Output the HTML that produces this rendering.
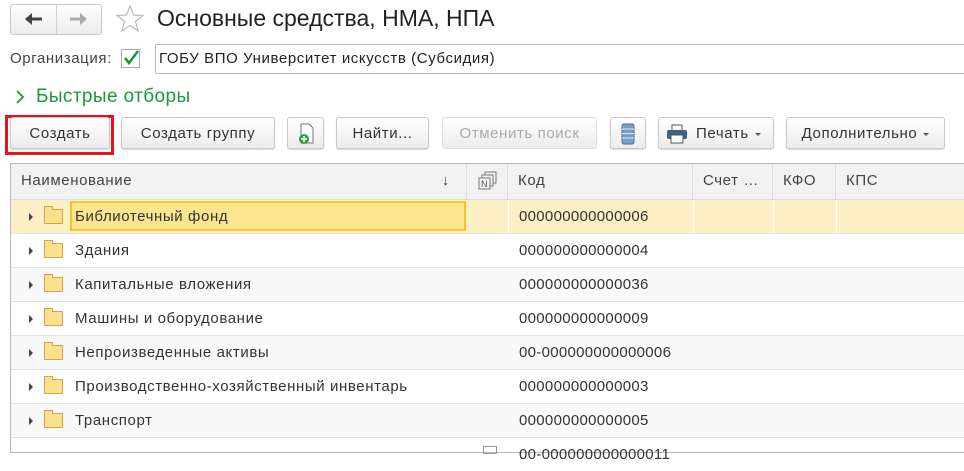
<!DOCTYPE html>
<html><head><meta charset="utf-8"><style>
body{margin:0;width:964px;height:449px;overflow:hidden;background:#fff;font-family:"Liberation Sans",Arial,sans-serif;color:#333;font-size:15px;letter-spacing:0.6px;position:relative}
.a{position:absolute}
.btn{position:absolute;top:117px;height:32px;border:1px solid #c8c8c8;border-radius:3px;background:linear-gradient(#fff,#ececec);box-shadow:0 1px 1px rgba(0,0,0,.15);line-height:32px;text-align:center;color:#333;font-size:15px;box-sizing:border-box}
.row{position:absolute;left:11px;width:953px;height:33px;border-bottom:1px solid #e2e2e2}
.row .t{position:absolute;left:64px;top:8px}
.row .c{position:absolute;left:508px;top:8px;letter-spacing:0.3px}
.tri{position:absolute;left:18px;top:13px;width:0;height:0;border-left:4px solid #444;border-top:4px solid transparent;border-bottom:4px solid transparent}
.fold{position:absolute;left:33px;top:9px;width:17px;height:13px;border:1px solid #d4a24a;background:#fbe08e;border-radius:1px}
.fold:before{content:"";position:absolute;left:-1px;top:-4px;width:7px;height:3px;border:1px solid #d4a24a;border-bottom:none;background:#fbe08e}
.hd{position:absolute;top:164px;height:35px;background:#f2f2f2;border-right:1px solid #ddd;line-height:34px;box-sizing:border-box;padding-left:10px;color:#444}
.dd{display:inline-block;width:0;height:0;border-top:3px solid #555;border-left:3px solid transparent;border-right:3px solid transparent;vertical-align:middle;margin-left:6px}
</style></head><body>
<div class="a" style="left:10px;top:4px;width:90px;height:29px;border:1px solid #c8c8c8;border-radius:3px;background:linear-gradient(#fff,#ececec)"></div>
<div class="a" style="left:56px;top:5px;width:1px;height:29px;background:#d0d0d0"></div>
<svg class="a" style="left:24px;top:11px" width="20" height="16"><path d="M2 8h16" stroke="#444" stroke-width="3"/><path d="M1 8l7-6v12z" fill="#444"/></svg>
<svg class="a" style="left:68px;top:11px" width="20" height="16"><path d="M2 8h14" stroke="#aaa" stroke-width="3"/><path d="M19 8l-7-6v12z" fill="#aaa"/></svg>
<svg class="a" style="left:115px;top:4px" width="30" height="30" viewBox="0 0 30 30"><polygon points="15,2 18.5,11 28,11.5 20.5,17.5 23,27 15,21.5 7,27 9.5,17.5 2,11.5 11.5,11" fill="none" stroke="#bbb" stroke-width="1.2"/></svg>
<div class="a" style="left:157px;top:5px;font-size:23px;color:#222;letter-spacing:0">Основные средства, НМА, НПА</div>
<div class="a" style="left:10px;top:50px;color:#444">Организация:</div>
<div class="a" style="left:121px;top:49px;width:17px;height:17px;border:1px solid #aaa;background:#fff"></div>
<svg class="a" style="left:121px;top:48px" width="20" height="20"><path d="M4 10 L8 15 L17 3" stroke="#1a9a3a" stroke-width="2.6" fill="none"/></svg>
<div class="a" style="left:155px;top:44px;width:815px;height:28px;border:1px solid #bbb;border-radius:2px"></div>
<div class="a" style="left:159px;top:50px;color:#222">ГОБУ ВПО Университет искусств (Субсидия)</div>
<svg class="a" style="left:15px;top:89px" width="10" height="16"><path d="M2 2l6 6-6 6" stroke="#1a9a3a" stroke-width="1.8" fill="none"/></svg>
<div class="a" style="left:36px;top:86px;font-size:19px;color:#1a9a3a;letter-spacing:0.4px">Быстрые отборы</div>
<div class="a" style="left:5px;top:115px;width:103px;height:34px;border:3px solid #e8141b"></div>
<div class="btn" style="left:10px;width:100px">Создать</div>
<div class="btn" style="left:121px;width:154px">Создать группу</div>
<div class="btn" style="left:287px;width:37px"><svg width="20" height="24" style="margin-top:4px"><path d="M5 2h8l4 4v15H5z" fill="#fff" stroke="#777"/><circle cx="8" cy="17" r="5" fill="#2f9e3c"/><path d="M8 14v6M5 17h6" stroke="#fff" stroke-width="1.6"/></svg></div>
<div class="btn" style="left:336px;width:93px">Найти...</div>
<div class="btn" style="left:442px;width:155px;color:#aaa;box-shadow:none;border-color:#ddd">Отменить поиск</div>
<div class="btn" style="left:610px;width:36px"><svg width="14" height="22" style="margin-top:5px"><rect x="1" y="1" width="12" height="20" rx="2" fill="#7aa0c8" stroke="#4b6f95"/><path d="M1 6h12M1 10.5h12M1 15h12" stroke="#dde8f3"/></svg></div>
<div class="btn" style="left:658px;width:116px;text-align:left;padding-left:37px">Печать<span class="dd"></span></div>
<svg class="a" style="left:666px;top:124px" width="22" height="20"><rect x="6" y="1" width="10" height="6" fill="#fff" stroke="#555"/><rect x="1" y="6" width="20" height="9" rx="2" fill="#3d5f8a"/><rect x="5" y="11" width="12" height="8" fill="#fff" stroke="#555"/></svg>
<div class="btn" style="left:786px;width:159px">Дополнительно<span class="dd"></span></div>
<div class="a" style="left:10px;top:163px;width:954px;height:290px;border:1px solid #b8b8b8;border-right:none;box-sizing:border-box"></div>
<div class="hd" style="left:11px;width:456px">Наименование<span style="position:absolute;right:16px">↓</span></div>
<div class="hd" style="left:467px;width:41px"><svg width="20" height="20" style="margin-top:7px;margin-left:1px"><rect x="7" y="1" width="11" height="11" fill="none" stroke="#777"/><rect x="4" y="4" width="11" height="11" fill="#f2f2f2" stroke="#777"/><rect x="1" y="7" width="11" height="11" fill="#f2f2f2" stroke="#777"/><text x="3" y="16" font-size="9" fill="#555" font-family="Liberation Sans">N</text></svg></div>
<div class="hd" style="left:508px;width:185px">Код</div>
<div class="hd" style="left:693px;width:80px">Счет …</div>
<div class="hd" style="left:773px;width:63px">КФО</div>
<div class="hd" style="left:836px;width:128px;border-right:none">КПС</div>
<div class="a" style="left:11px;top:199px;width:953px;height:1px;background:#ddd"></div>
<div class="row" style="top:200px;background:#fdf0c4"><div class="a" style="left:59px;top:1px;width:396px;height:30px;background:#fde590;border:2px solid #f5c827;box-sizing:border-box"></div><div class="a" style="left:497px;top:0;width:1px;height:33px;background:#fff"></div><div class="a" style="left:682px;top:0;width:1px;height:33px;background:#fff"></div><div class="a" style="left:762px;top:0;width:1px;height:33px;background:#fff"></div><div class="a" style="left:825px;top:0;width:1px;height:33px;background:#fff"></div><div class="tri"></div><div class="fold"></div><div class="t">Библиотечный фонд</div><div class="c">000000000000006</div></div>
<div class="row" style="top:234px"><div class="tri"></div><div class="fold"></div><div class="t">Здания</div><div class="c">000000000000004</div></div>
<div class="row" style="top:268px;background:#f9f9f9"><div class="tri"></div><div class="fold"></div><div class="t">Капитальные вложения</div><div class="c">000000000000036</div></div>
<div class="row" style="top:302px"><div class="tri"></div><div class="fold"></div><div class="t">Машины и оборудование</div><div class="c">000000000000009</div></div>
<div class="row" style="top:336px;background:#f9f9f9"><div class="tri"></div><div class="fold"></div><div class="t">Непроизведенные активы</div><div class="c">00-000000000000006</div></div>
<div class="row" style="top:370px"><div class="tri"></div><div class="fold"></div><div class="t">Производственно-хозяйственный инвентарь</div><div class="c">000000000000003</div></div>
<div class="row" style="top:404px;background:#f9f9f9"><div class="tri"></div><div class="fold"></div><div class="t">Транспорт</div><div class="c">000000000000005</div></div>
<div class="row" style="top:438px;border:none"><div class="a" style="left:472px;top:8px;width:12px;height:6px;border:1px solid #999"></div><div class="c" style="top:8px">00-000000000000011</div></div>
</body></html>
